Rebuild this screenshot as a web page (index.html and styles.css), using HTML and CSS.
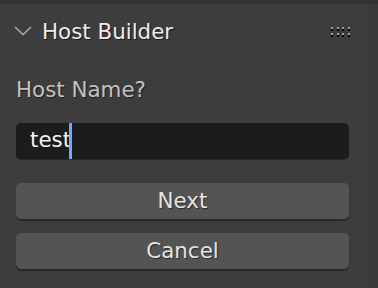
FILE: index.html
```html
<!DOCTYPE html>
<html lang="en">
<head>
    <meta charset="UTF-8">
    <title>Host Builder</title>
    <link rel="stylesheet" href="styles.css">
</head>
<body>
    <div class="region">
        <div class="panel">
            <div class="panel-header">
                <svg class="chevron" width="18" height="10" viewBox="0 0 18 10">
                    <polyline points="1,1 9,8.5 17,1" fill="none" stroke="#a3a3a3" stroke-width="1.7"/>
                </svg>
                <span class="panel-title">Host Builder</span>
                <svg class="grip" width="22" height="10" viewBox="0 0 22 10">
                    <g fill="#000">
                        <rect x="0" y="2" width="2" height="2"/><rect x="6" y="2" width="2" height="2"/>
                        <rect x="11" y="2" width="2" height="2"/><rect x="17" y="2" width="2" height="2"/>
                        <rect x="0" y="8" width="2" height="2"/><rect x="6" y="8" width="2" height="2"/>
                        <rect x="11" y="8" width="2" height="2"/><rect x="17" y="8" width="2" height="2"/>
                    </g>
                    <g fill="#a0a0a0">
                        <rect x="0" y="0" width="2" height="2"/><rect x="6" y="0" width="2" height="2"/>
                        <rect x="11" y="0" width="2" height="2"/><rect x="17" y="0" width="2" height="2"/>
                        <rect x="0" y="6" width="2" height="2"/><rect x="6" y="6" width="2" height="2"/>
                        <rect x="11" y="6" width="2" height="2"/><rect x="17" y="6" width="2" height="2"/>
                    </g>
                </svg>
            </div>
            <div class="field-label">Host Name?</div>
            <div class="text-field">
                <span class="text-value">test</span><span class="caret"></span>
            </div>
            <button class="ui-btn btn-next">Next</button>
            <button class="ui-btn btn-cancel">Cancel</button>
        </div>
        <div class="scroll-strip"></div>
    </div>
</body>
</html>
```

FILE: styles.css
```css
html, body {
    margin: 0;
    padding: 0;
}
body {
    width: 378px;
    height: 288px;
    overflow: hidden;
    background: #3d3d3d;
    font-family: 'DejaVu Sans', 'Liberation Sans', sans-serif;
    font-size: 21.4px;
}
.region {
    display: flex;
    height: 288px;
}
.panel {
    flex: 1;
    border-top: 4px solid #323232;
    padding: 0 18px 0 16px;
    background: #3d3d3d;
}
.scroll-strip {
    width: 11px;
    background: #3a3a3a;
    border-top: 4px solid #323232;
}
.panel-header {
    display: flex;
    align-items: center;
    height: 54px;
}
.chevron {
    margin-left: -2px;
    margin-right: 10px;
}
.panel-title {
    flex: 1;
    color: #ececec;
    text-shadow: 1px 1px 1px rgba(0, 0, 0, 0.6);
}
.grip {
    margin-right: -4px;
    margin-top: 1px;
}
.field-label {
    margin-top: 20px;
    line-height: 24px;
    color: #c2c2c2;
    text-shadow: 1px 1px 1px rgba(0, 0, 0, 0.5);
}
.text-field {
    display: flex;
    align-items: stretch;
    height: 36px;
    margin-top: 21px;
    padding-left: 14px;
    background: #1c1c1c;
    border-radius: 5px;
    box-shadow: 0 1px 1px rgba(0, 0, 0, 0.35);
}
.text-value {
    color: #f4f4f4;
    line-height: 34px;
}
.caret {
    width: 3px;
    margin-left: -2px;
    background: #72a9ff;
}
.ui-btn {
    display: block;
    width: 100%;
    height: 36px;
    padding: 0;
    border: none;
    border-radius: 5px;
    background: #545454;
    color: #e4e4e4;
    font-family: inherit;
    font-size: 21.4px;
    line-height: 34px;
    text-align: center;
    text-shadow: 1px 1px 1px rgba(0, 0, 0, 0.5);
    box-shadow: 0 2px 1px rgba(0, 0, 0, 0.35);
}
.btn-next {
    margin-top: 24px;
}
.btn-cancel {
    margin-top: 14px;
}
```
